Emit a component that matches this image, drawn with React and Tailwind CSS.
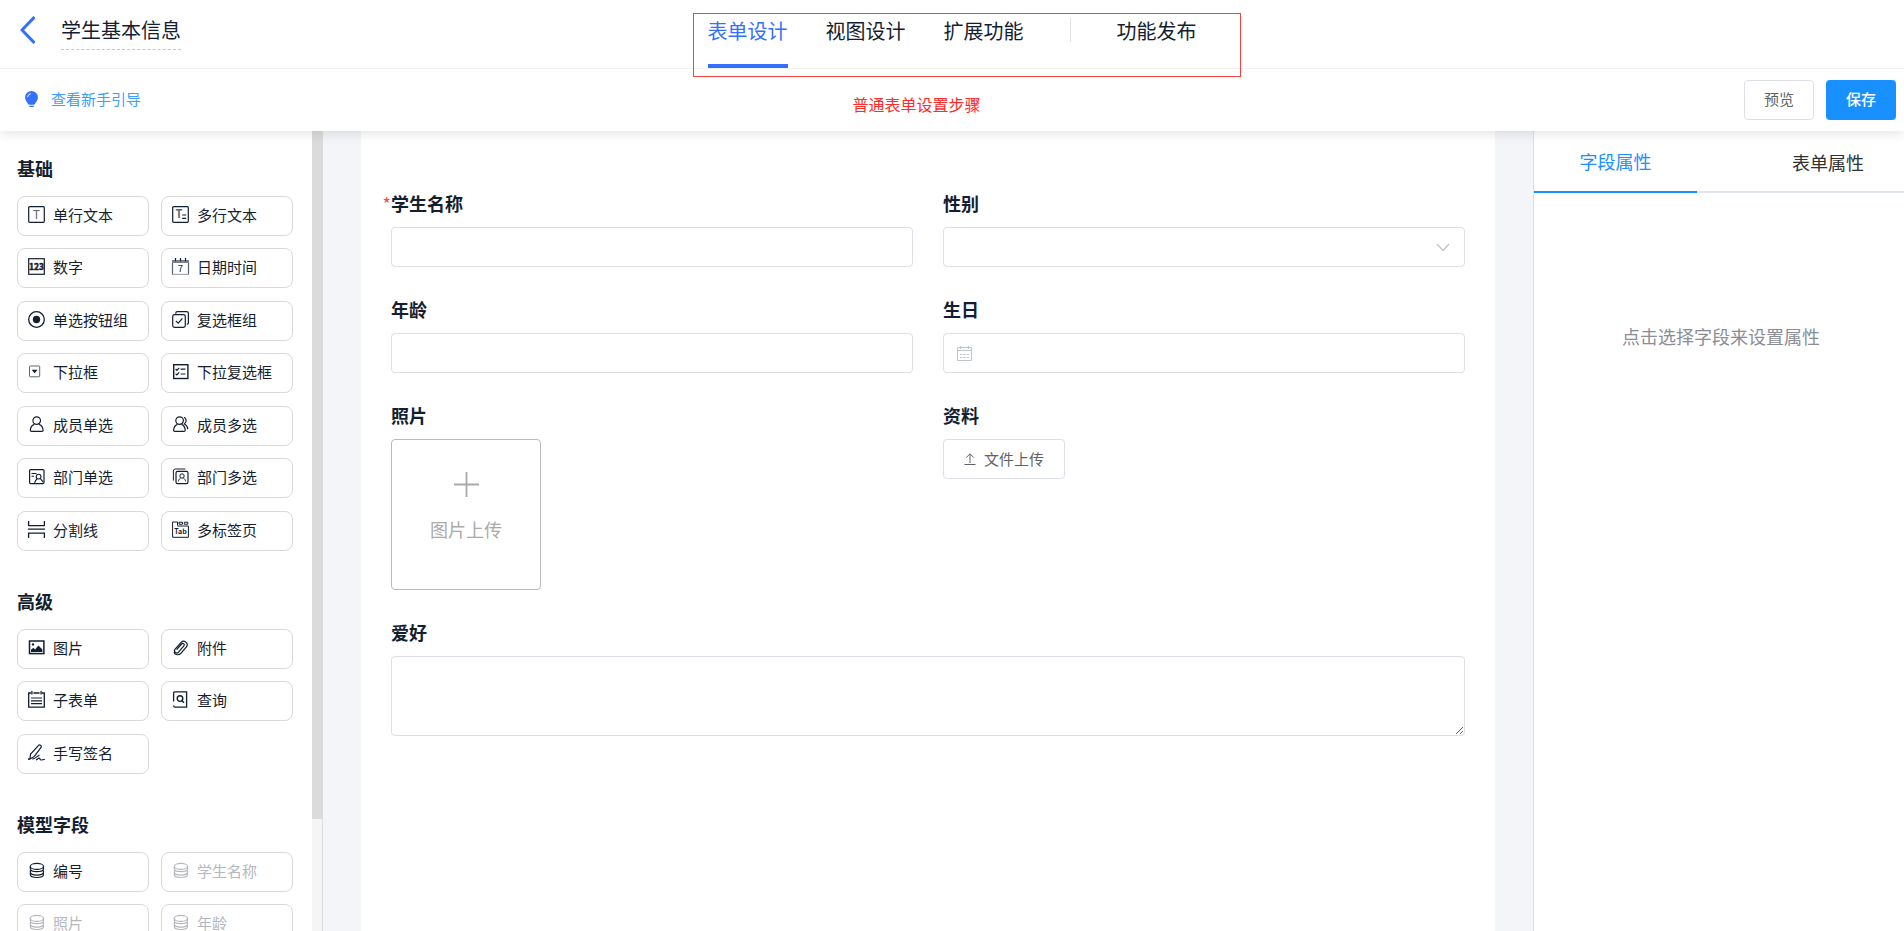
import React, { useState } from 'react'

const iconPaths = {
  text: (
    <>
      <rect x="0.7" y="0.7" width="15.6" height="15.6" rx="1" />
      <text x="8.5" y="12.6" textAnchor="middle" fontSize="11.5" fill="#5b6472" stroke="none">T</text>
    </>
  ),
  textarea: (
    <>
      <rect x="0.7" y="0.7" width="15.6" height="15.6" rx="1" />
      <text x="7" y="12.4" textAnchor="middle" fontSize="11" fontWeight="700" fill="#5b6472" stroke="none">T</text>
      <path d="M10.2 9h4M10.2 12.4h4" />
    </>
  ),
  number: (
    <>
      <rect x="0.7" y="0.7" width="15.6" height="15.6" />
      <text x="8.5" y="12.3" textAnchor="middle" fontSize="8.5" fontWeight="700" fill="currentColor" strokeWidth="0.5">
        123
      </text>
    </>
  ),
  date: (
    <>
      <path d="M0 2h17v3H0z" fill="#7d828c" stroke="none" />
      <path d="M3.5 0v3.2M8.5 0v3.2M13.5 0v3.2" />
      <path d="M0.5 5v11.4M16.5 5v11.4" stroke="#5b6472" />
      <path d="M0 16.4h17" stroke="#a3a7af" />
      <text x="8.5" y="14.2" textAnchor="middle" fontSize="9.5" fill="currentColor" stroke="none">7</text>
    </>
  ),
  radio: (
    <>
      <circle cx="8.5" cy="8.5" r="7.8" strokeWidth="1.3" />
      <circle cx="8.5" cy="8.5" r="3.7" fill="currentColor" stroke="none" />
    </>
  ),
  checkbox: (
    <>
      <rect x="0.7" y="3.7" width="12.6" height="12.6" rx="1.8" />
      <path d="M3.8 2.8V2A1.4 1.4 0 0 1 5.2.7h9.4a1.8 1.8 0 0 1 1.8 1.8v9.2a1.5 1.5 0 0 1-1.6 1.5" />
      <path d="M3.8 9.8l2.4 2.4 4.2-4.8" />
    </>
  ),
  select: (
    <>
      <rect x="1.5" y="3" width="10.2" height="10.8" rx="0.8" stroke="#5b6472" strokeWidth="1" />
      <path d="M3.6 6.8h6L6.6 10.200z" fill="currentColor" stroke="none" />
    </>
  ),
  multiSelect: (
    <>
      <rect x="1.7" y="1.7" width="14.2" height="13.8" strokeWidth="1.4" />
      <path d="M3.6 6l1.3 1.3 2.3-2.5M3.6 10.6l1.3 1.3 2.3-2.5M8.6 6.2h4.8M8.6 11h4.8" />
    </>
  ),
  member: (
    <>
      <circle cx="8.7" cy="4.6" r="3.8" />
      <path d="M6.3 8.4c-2.6 1-3.8 3-4 5.8 0 .8.4 1.2 1.2 1.2h10.4c.8 0 1.2-.4 1.2-1.2-.2-2.8-1.4-4.8-4-5.8" />
    </>
  ),
  members: (
    <>
      <circle cx="7.6" cy="4.6" r="3.8" />
      <path d="M5.4 8.4c-2.5 1-3.6 3-3.8 5.8 0 .8.4 1.2 1.2 1.2h9.2c.8 0 1.2-.4 1.2-1.2-.2-2.8-1.2-4.8-3.6-5.8" />
      <path d="M12 1.2c2.6 1 2.900 4.600.4 6.800 2 .9 3.200 2.700 3.400 5.100" />
    </>
  ),
  dept: (
    <>
      <rect x="1.6" y="1.600" width="14.400" height="14" rx="1" />
      <path d="M3.500 5.500h5M3.500 8.200h2.500" strokeWidth="1" />
      <circle cx="10.600" cy="8.600" r="2.400" strokeWidth="1.100" />
      <path d="M6.600 15.200c.4-2.200 1.200-3.400 2.600-4.400M12.400 10.600l2.800 3.600" strokeWidth="1.100" />
    </>
  ),
  depts: (
    <>
      <rect x="4" y="3.400" width="12" height="12.200" rx="1.600" />
      <path d="M1.400 12.600V3A2 2 0 0 1 3.400 1h10" strokeWidth="1" />
      <circle cx="10" cy="8" r="2.200" strokeWidth="1" />
      <path d="M6.400 13.400c.4-1.800 1-2.600 2.200-3.400M11.400 10c1.200.8 1.800 1.600 2.200 3.400" strokeWidth="1" />
    </>
  ),
  divider: <path d="M0.6 0v4.6h15.8V0M0 8.2h17M0.6 17v-4.9h15.8V17" strokeWidth="1.3" />,
  tabs: (
    <>
      <path d="M5.500 4.500V1H.6v15.300h15.800V5H5.500M7 1.200h3.500v2H7zM12.300 1.200h3.500v2h-3.500z" strokeWidth="1" />
      <text x="8.500" y="13.300" textAnchor="middle" fontSize="7" fontWeight="700" fill="currentColor" stroke="none">
        Tab
      </text>
    </>
  ),
  image: (
    <>
      <rect x="1.5" y="2" width="14.4" height="12.6" strokeWidth="1.5" />
      <path d="M3 13v-2.2l2.4-2 1.6 1.6 3.4-4 4 4.2V13z" fill="currentColor" stroke="none" />
      <circle cx="5" cy="5.4" r="1.2" fill="currentColor" stroke="none" />
    </>
  ),
  attachment: (
    <path d="M4.6 10.6l5-5.6c1.4-1.5 3.6.3 2.3 1.9l-5.4 6.2c-2 2.3-5.4-.5-3.4-2.900L9.2 3.400c2.700-3 8 .8 5.200 4.500l-5.300 6.200c-2.300 2.600-6.200 2-7.200-.8" />
  ),
  subform: (
    <>
      <path d="M3 2H.7v14.2h15.6V2H14M5.4 2h6.2M3.9 0v3.6M13.1 0v3.6" strokeWidth="1.3" />
      <path d="M3 7h11M3 9.8h11M3 12.6h11" />
    </>
  ),
  query: (
    <>
      <path d="M1.6 10.6V2.2C1.6 1.4 2 .8 3 .8h11.6v15.4H3.2c-1 0-1.6-.6-1.6-1.6" strokeWidth="1.3" />
      <circle cx="8" cy="7.6" r="2.8" strokeWidth="1.4" />
      <path d="M10 9.8l2 2" strokeWidth="1.4" />
    </>
  ),
  sign: (
    <path d="M10.6 1.4c.9-1.1 3.3.4 2.6 1.8L6.4 12.400l-4.600 2.600.8-5zM1.800 15c-1.200.8-1.600 0-1-.6M4.400 15.200c3-.8 4.600-2.800 7-4.200M8 16c1.400-.6 2-1.800 3.200-1.800 1 0 .6 1.800 1.800 1.800s2-.6 3.800-.6" />
  ),
  database: (
    <>
      <ellipse cx="8.9" cy="4.4" rx="6.6" ry="3" />
      <path d="M2.3 4.400v2.300c0 1.700 3 3 6.600 3s6.600-1.300 6.600-3V4.400M2.300 8.400v1.700c0 1.700 3 3 6.600 3s6.600-1.300 6.600-3V8.400M2.300 11.200v1.300c0 1.700 3 3 6.600 3s6.600-1.300 6.600-3v-1.300" />
    </>
  ),
}

const groups = [
  {
    title: '基础',
    items: [
      { icon: 'text', label: '单行文本' },
      { icon: 'textarea', label: '多行文本' },
      { icon: 'number', label: '数字' },
      { icon: 'date', label: '日期时间' },
      { icon: 'radio', label: '单选按钮组' },
      { icon: 'checkbox', label: '复选框组' },
      { icon: 'select', label: '下拉框' },
      { icon: 'multiSelect', label: '下拉复选框' },
      { icon: 'member', label: '成员单选' },
      { icon: 'members', label: '成员多选' },
      { icon: 'dept', label: '部门单选' },
      { icon: 'depts', label: '部门多选' },
      { icon: 'divider', label: '分割线' },
      { icon: 'tabs', label: '多标签页' },
    ],
  },
  {
    title: '高级',
    items: [
      { icon: 'image', label: '图片' },
      { icon: 'attachment', label: '附件' },
      { icon: 'subform', label: '子表单' },
      { icon: 'query', label: '查询' },
      { icon: 'sign', label: '手写签名' },
    ],
  },
  {
    title: '模型字段',
    items: [
      { icon: 'database', label: '编号' },
      { icon: 'database', label: '学生名称', disabled: true },
      { icon: 'database', label: '照片', disabled: true },
      { icon: 'database', label: '年龄', disabled: true },
    ],
  },
]

function FieldIcon({ name }) {
  return (
    <svg
      viewBox="0 0 17 17"
      className="w-[17px] h-[17px] -mt-[2px] shrink-0 overflow-visible"
      fill="none"
      stroke="currentColor"
      strokeWidth="1.2"
      aria-hidden="true"
    >
      {iconPaths[name]}
    </svg>
  )
}

function StepTab({ active, onClick, children }) {
  return (
    <button
      onClick={onClick}
      className={
        active
          ? 'h-full pb-[2px] border-b-4 border-[#3370ff] text-[#3370ff]'
          : 'h-full pb-[2px] border-b-4 border-transparent text-[#141e31]'
      }
    >
      {children}
    </button>
  )
}

function Header() {
  const [step, setStep] = useState('表单设计')

  return (
    <header className="relative z-10 bg-white shadow-[0_2px_12px_rgba(0,0,0,0.12)]">
      <div className="grid grid-cols-[1fr_auto_1fr] h-[69px] border-b border-[#f2f2f2]">
        <div className="flex items-center gap-[26px] pl-5 pb-2">
          <button aria-label="返回">
            <svg viewBox="0 0 15 28" className="w-[15px] h-7" fill="none" stroke="#3370ff" strokeWidth="3">
              <path d="M14.500 1L2 14l12.500 13" strokeLinejoin="round" />
            </svg>
          </button>
          <h1 className="text-xl leading-[38px] border-b border-dashed border-[#c4c4c4]">学生基本信息</h1>
        </div>

        <nav className="relative flex items-center gap-[38px] text-xl">
          {['表单设计', '视图设计', '扩展功能'].map((name) => (
            <StepTab key={name} active={step === name} onClick={() => setStep(name)}>
              {name}
            </StepTab>
          ))}
          <span className="w-px h-6 mx-2 mb-2 bg-[#e4e4e4]" />
          <StepTab active={step === '功能发布'} onClick={() => setStep('功能发布')}>
            功能发布
          </StepTab>

          {/* Red callout over the steps */}
          <div className="absolute -left-[15px] -right-[44px] top-[13px] -bottom-[9px] border border-[#f5423f] pointer-events-none">
            <span className="absolute left-[159px] top-[78px] text-base leading-6 whitespace-nowrap text-[#ff2b2b]">
              普通表单设置步骤
            </span>
          </div>
        </nav>
      </div>

      <div className="flex items-center justify-between h-[62px] pl-[25px] pr-2 text-[15px]">
        <a href="#guide" className="flex items-center gap-[13px] pb-[2px] text-[#409eff]">
          <svg viewBox="0 0 13 17" className="w-[13px] h-[17px]" aria-hidden="true">
            <path
              d="M6.500 0a6.400 6.400 0 0 1 6.400 6.400c0 2.700-1.700 4.200-2.700 6.200-.2.800-.7 1.100-1.400 1.100H4.200c-.7 0-1.200-.3-1.400-1.100C1.800 10.600.1 9.100.1 6.400A6.400 6.400 0 0 1 6.500 0z"
              fill="#3370ff"
            />
            <path d="M2.600 6.200A4 4 0 0 1 5.800 2.700" fill="none" stroke="#fff" strokeWidth="1" />
            <path d="M4.300 15.400h4.400" stroke="#3370ff" strokeWidth="1.200" />
          </svg>
          查看新手引导
        </a>
        <div className="flex gap-3">
          <button className="w-[70px] h-10 pb-px rounded border border-[#dcdfe6] text-[#606266]">预览</button>
          <button className="w-[70px] h-10 pb-px rounded bg-[#1890ff] font-medium text-white">保存</button>
        </div>
      </div>
    </header>
  )
}

function Sidebar() {
  return (
    <aside className="flex w-[323px] shrink-0 border-r border-[#dcdcdc]">
      <div className="flex-1 overflow-hidden pt-[21px] pl-[17px] pr-[19px]">
        {groups.map((group) => (
          <section key={group.title} className="mb-[34px]">
            <h2 className="text-lg leading-8 font-bold mb-[11px]">{group.title}</h2>
            <div className="grid grid-cols-2 gap-x-3 gap-y-3">
              {group.items.map((item, i) => (
                <button
                  key={i}
                  disabled={item.disabled}
                  className="flex items-center gap-2 h-10 px-[10px] pb-[2px] nth-[4n+1]:mt-px nth-[4n+2]:mt-px rounded-lg border border-[#d9d9dc] text-[15px] whitespace-nowrap disabled:text-[#b4b7be]"
                >
                  <FieldIcon name={item.icon} />
                  {item.label}
                </button>
              ))}
            </div>
          </section>
        ))}
      </div>
      <div className="w-[10px] bg-[#f5f5f5]">
        <div className="h-[86%] bg-[#dbdbdb]" />
      </div>
    </aside>
  )
}

const controlClass = 'block w-full h-10 px-4 rounded border border-[#dcdfe6] bg-white text-[15px] outline-none'

function Field({ id, label, required, wide, children }) {
  return (
    <div className={wide ? 'col-span-2' : ''}>
      <label htmlFor={id} className="relative block w-fit mb-3 text-lg leading-6 font-bold">
        {required && <span className="absolute right-full font-normal text-[#f54a45]">*</span>}
        {label}
      </label>
      {children}
    </div>
  )
}

function FormCanvas() {
  return (
    <main className="flex-1 px-[38px] bg-[#f4f5f8]">
      <form className="grid grid-cols-2 content-start gap-[30px] h-full px-[30px] pt-[60px] bg-white">
        <Field id="name" label="学生名称" required>
          <input id="name" type="text" className={controlClass} />
        </Field>

        <Field id="gender" label="性别">
          <div className="relative">
            <select id="gender" className={`${controlClass} appearance-none`} defaultValue="">
              <option value=""></option>
            </select>
            <svg
              viewBox="0 0 14 9"
              className="absolute right-[15px] top-4 w-[14px] h-[9px] pointer-events-none"
              fill="none"
              stroke="#c0c4cc"
              strokeWidth="1.300"
            >
              <path d="M1 1l6 6.500L13 1" />
            </svg>
          </div>
        </Field>

        <Field id="age" label="年龄">
          <input id="age" type="text" className={controlClass} />
        </Field>

        <Field id="birthday" label="生日">
          <div className="relative">
            <input id="birthday" type="text" className={`${controlClass} pl-10`} />
            <svg
              viewBox="0 0 15 15"
              className="absolute left-[14px] top-[13px] w-[15px] h-[15px] pointer-events-none"
              fill="none"
              stroke="#c0c4cc"
            >
              <path d="M.5 1.500h14v13H.5zM.5 4.500h14M3.500 0v3M11.500 0v3" />
              <path d="M3 8.500h9M3 11.500h9" strokeDasharray="2.400 0.900" />
            </svg>
          </div>
        </Field>

        <Field id="photo" label="照片">
          <button
            id="photo"
            type="button"
            className="flex flex-col items-center gap-5 w-[150px] h-[151px] pt-8 rounded border border-[#bbb] text-lg leading-6 text-[#aaa]"
          >
            <svg viewBox="0 0 25 25" className="w-[25px] h-[25px]" stroke="currentColor" strokeWidth="1.800">
              <path d="M12.500 0v25M0 12.500h25" />
            </svg>
            图片上传
          </button>
        </Field>

        <Field id="file" label="资料">
          <button
            id="file"
            type="button"
            className="flex items-center gap-2 h-10 px-5 rounded border border-[#dcdfe6] text-[15px] text-[#606266]"
          >
            <svg viewBox="0 0 12 12" className="w-3 h-3" fill="none" stroke="currentColor">
              <path d="M6 10V1M2.200 4.600L6 .8l3.800 3.800M.5 11.500h11" />
            </svg>
            文件上传
          </button>
        </Field>

        <Field id="hobby" label="爱好" wide>
          <textarea
            id="hobby"
            className="block w-full h-20 px-4 py-2 rounded border border-[#dcdfe6] resize-y outline-none"
          />
        </Field>
      </form>
    </main>
  )
}

function PropertyPanel() {
  return (
    <aside className="w-[371px] shrink-0 border-l border-[#dcdcdc] text-lg">
      <div className="flex justify-between h-[62px] shadow-[inset_0_-2px_0_#e0e4ed]">
        <button className="w-[163px] border-b-2 border-[#1890ff] text-[#1890ff]">字段属性</button>
        <button className="px-10 text-[#303133]">表单属性</button>
      </div>
      <p className="mt-[131px] pl-1 text-center leading-6 text-[#8a8d96]">点击选择字段来设置属性</p>
    </aside>
  )
}

export default function App() {
  return (
    <div className="flex flex-col h-screen overflow-hidden bg-white text-[#141e31] font-['Noto_Sans_CJK_SC',sans-serif]">
      <Header />
      <div className="flex flex-1 min-h-0">
        <Sidebar />
        <FormCanvas />
        <PropertyPanel />
      </div>
    </div>
  )
}
